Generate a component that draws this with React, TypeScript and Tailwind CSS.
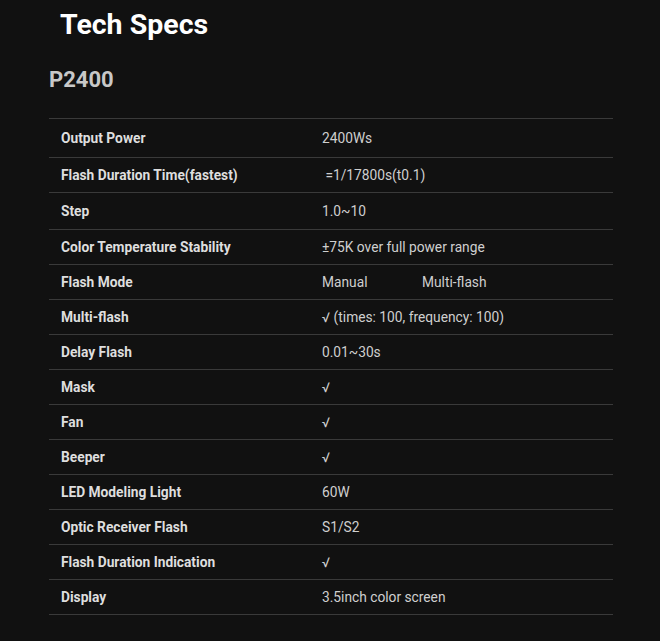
const specs: { label: string; value: React.ReactNode; h: string }[] = [
  { label: "Output Power", value: "2400Ws", h: "h-[39px]" },
  { label: "Flash Duration Time(fastest)", value: "\u00a0=1/17800s(t0.1)", h: "h-[35px]" },
  { label: "Step", value: "1.0~10", h: "h-[37px]" },
  { label: "Color Temperature Stability", value: "±75K over full power range", h: "h-[35px]" },
  {
    label: "Flash Mode",
    value: (
      <span className="flex">
        <span className="w-[100px]">Manual</span>
        <span>Multi-flash</span>
      </span>
    ),
    h: "h-[35px]",
  },
  { label: "Multi-flash", value: "√ (times: 100, frequency: 100)", h: "h-[35px]" },
  { label: "Delay Flash", value: "0.01~30s", h: "h-[35px]" },
  { label: "Mask", value: "√", h: "h-[35px]" },
  { label: "Fan", value: "√", h: "h-[35px]" },
  { label: "Beeper", value: "√", h: "h-[35px]" },
  { label: "LED Modeling Light", value: "60W", h: "h-[35px]" },
  { label: "Optic Receiver Flash", value: "S1/S2", h: "h-[35px]" },
  { label: "Flash Duration Indication", value: "√", h: "h-[35px]" },
  { label: "Display", value: "3.5inch color screen", h: "h-[35px]" },
];

export default function App() {
  return (
    <div className="min-h-screen bg-[#111111] pb-[28px] font-['Roboto',sans-serif]">
      {/* Titre */}
      <h1 className="pl-[60px] pt-[7px] text-[28.5px] font-bold leading-[36px] text-white">
        Tech Specs
      </h1>

      <div className="ml-[49px] w-[564px]">
        <h2 className="mt-[23px] text-[22px] font-bold leading-[28px] text-[#c8c8c8]">P2400</h2>

        {/* Tableau des caractéristiques */}
        <div className="mt-[24px] border-t border-[#3a3a3a]">
          {specs.map((s) => (
            <div
              key={s.label}
              className={`flex items-center border-b border-[#3a3a3a] text-[13.75px] ${s.h}`}
            >
              <div className="w-[261px] px-3 font-bold text-[#dedede]">{s.label}</div>
              <div className="flex-1 px-3 text-[#cfcfcf]">{s.value}</div>
            </div>
          ))}
        </div>
      </div>
    </div>
  );
}
